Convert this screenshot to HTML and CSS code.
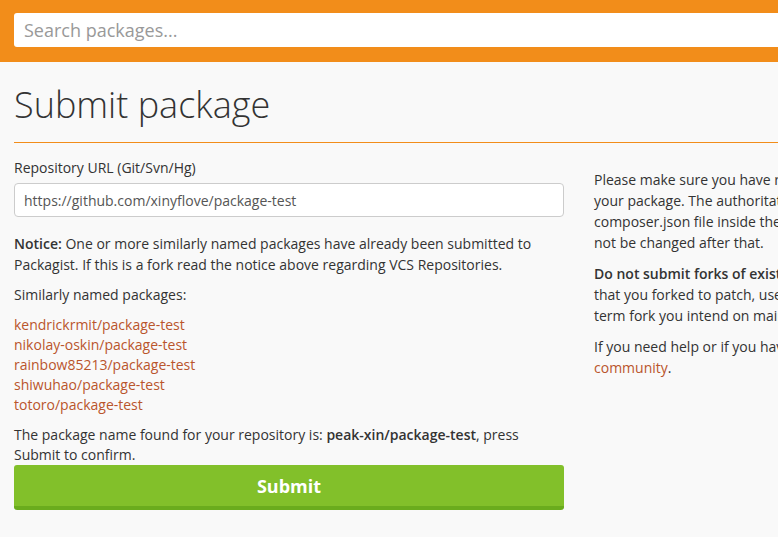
FILE: index.html
```html
<!DOCTYPE html>
<html lang="en">
<head>
<meta charset="utf-8">
<title>Submit package - Packagist</title>
<link rel="stylesheet" href="styles.css">
</head>
<body>
<header class="navbar">
  <div class="container">
    <input class="search" type="search" placeholder="Search packages...">
  </div>
</header>
<main class="container page">
  <h1 class="title">Submit package</h1>
  <div class="cols">
    <form class="col-left">
      <label class="label" for="repo">Repository URL (Git/Svn/Hg)</label>
      <input id="repo" class="field" type="text" value="https://github.com/xinyflove/package-test">
      <p class="text notice"><strong>Notice:</strong> One or more similarly named packages have already been submitted to Packagist. If this is a fork read the notice above regarding VCS Repositories.</p>
      <p class="text">Similarly named packages:</p>
      <ul class="similar">
        <li><a href="#">kendrickrmit/package-test</a></li>
        <li><a href="#">nikolay-oskin/package-test</a></li>
        <li><a href="#">rainbow85213/package-test</a></li>
        <li><a href="#">shiwuhao/package-test</a></li>
        <li><a href="#">totoro/package-test</a></li>
      </ul>
      <p class="text found">The package name found for your repository is: <strong>peak-xin/package-test</strong>, press Submit to confirm.</p>
      <button class="submit" type="button">Submit</button>
    </form>
    <aside class="col-right">
      <p>Please make sure you have read the package naming conventions before submitting your package. The authoritative name of your package will be taken from the composer.json file inside the master branch or trunk of your repository, and it can not be changed after that.</p>
      <p><strong>Do not submit forks of existing packages.</strong> If you need to test changes to a package that you forked to patch, use VCS Repositories instead. If however it is a really long-term fork you intend on maintaining feel free to submit it.</p>
      <p>If you need help or if you have any questions please get in touch with the Composer <a href="#">community</a>.</p>
    </aside>
  </div>
</main>
</body>
</html>
```

FILE: styles.css
```css
html {
  overflow: hidden;
}
body {
  margin: 0;
  background: #f9f9f9;
  color: #333;
  font-family: "Open Sans", "Liberation Sans", sans-serif;
  font-size: 14px;
  line-height: 20px;
  min-width: 1200px;
}
strong {
  font-weight: 600;
}
.container {
  width: 1140px;
  margin-left: 14px;
}
.navbar {
  background: #f28d1a;
  padding: 13px 0 15px;
}
.search {
  display: block;
  box-sizing: border-box;
  width: 100%;
  height: 34px;
  border: 0;
  border-radius: 3px;
  background: #fff;
  padding: 0 10px;
  font-family: "Open Sans", "Liberation Sans", sans-serif;
  font-size: 18px;
  color: #555;
  outline: none;
}
.search::placeholder {
  color: #999;
}
.page {
  padding-top: 23px;
}
.title {
  margin: 0;
  font-size: 36px;
  font-weight: 300;
  line-height: 40px;
  padding-bottom: 17px;
  border-bottom: 1px solid #f28d1a;
  color: #333;
}
.cols {
  display: flex;
  gap: 30px;
  margin-top: 15px;
}
.col-left {
  width: 550px;
  flex: none;
}
.col-right {
  width: 555px;
  flex: none;
  padding-top: 11px;
  line-height: 21px;
}
.col-right p {
  margin: 0 0 10px;
}
.label {
  display: block;
  margin-bottom: 5px;
}
.field {
  display: block;
  box-sizing: border-box;
  width: 100%;
  height: 34px;
  border: 1px solid #ccc;
  border-radius: 4px;
  background: #fff;
  padding: 0 9px;
  font-family: "Open Sans", "Liberation Sans", sans-serif;
  font-size: 14px;
  color: #555;
  margin-bottom: 16px;
}
.text {
  margin: 0 0 10px;
}
.notice {
  line-height: 21px;
}
.similar {
  list-style: none;
  margin: 0 0 10px;
  padding: 0;
}
a {
  color: #b9552c;
  text-decoration: none;
}
.found {
  margin-bottom: 0;
}
.submit {
  display: block;
  width: 100%;
  height: 45px;
  border: 0;
  border-bottom: 4px solid #6aac1d;
  border-radius: 3px;
  background: #82c02a;
  color: #fff;
  font-family: "Open Sans", "Liberation Sans", sans-serif;
  font-size: 18px;
  font-weight: 700;
  padding: 0;
}
```
